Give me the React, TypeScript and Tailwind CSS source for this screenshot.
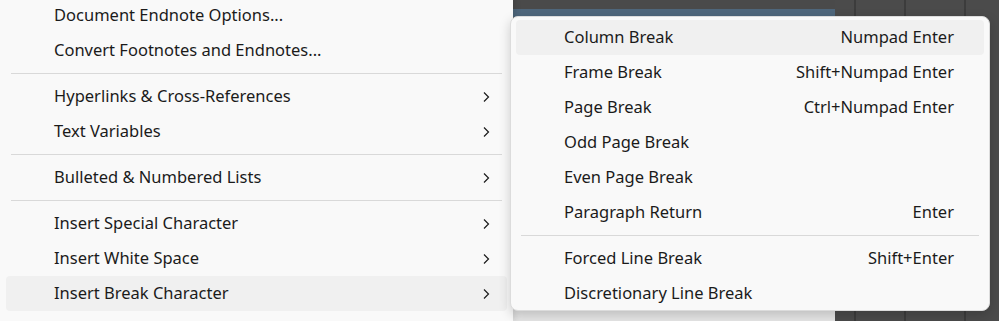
import React from "react";

type Item = { label: string; shortcut?: string; sub?: boolean; active?: boolean } | "sep";

const mainItems: Item[] = [
  { label: "Document Endnote Options..." },
  { label: "Convert Footnotes and Endnotes..." },
  "sep",
  { label: "Hyperlinks & Cross-References", sub: true },
  { label: "Text Variables", sub: true },
  "sep",
  { label: "Bulleted & Numbered Lists", sub: true },
  "sep",
  { label: "Insert Special Character", sub: true },
  { label: "Insert White Space", sub: true },
  { label: "Insert Break Character", sub: true, active: true },
];

const breakItems: Item[] = [
  { label: "Column Break", shortcut: "Numpad Enter", active: true },
  { label: "Frame Break", shortcut: "Shift+Numpad Enter" },
  { label: "Page Break", shortcut: "Ctrl+Numpad Enter" },
  { label: "Odd Page Break" },
  { label: "Even Page Break" },
  { label: "Paragraph Return", shortcut: "Enter" },
  "sep",
  { label: "Forced Line Break", shortcut: "Shift+Enter" },
  { label: "Discretionary Line Break" },
];

function Chevron() {
  return (
    <svg width="10" height="12" viewBox="0 0 10 12" className="text-[#1b1b1b]">
      <path d="M3 1.5 L7.5 6 L3 10.5" fill="none" stroke="currentColor" strokeWidth="1.2" />
    </svg>
  );
}

function Separator() {
  return (
    <div className="h-[11px] flex items-center px-[5px]">
      <div className="h-px w-full bg-[#d9d9d9]" />
    </div>
  );
}

export default function App() {
  return (
    <div
      className="relative flex w-[999px] h-[321px] overflow-hidden bg-[#4b4b4b] text-[16.5px] text-[#1b1b1b]"
      style={{ fontFamily: '"Noto Sans", "Open Sans", sans-serif' }}
    >
      {/* main menu */}
      <div className="relative z-10 w-[513px] shrink-0 -mt-[2px] bg-[#f9f9f9] shadow-[2px_0_6px_rgba(0,0,0,0.12)] px-[6px]">
        {mainItems.map((it, i) =>
          it === "sep" ? (
            <Separator key={i} />
          ) : (
            <div
              key={i}
              className={`h-[35px] flex items-center rounded-[4px] pl-[48px] pr-[16px] ${it.active ? "bg-[#f0f0f0]" : ""}`}
            >
              <span className="flex-1">{it.label}</span>
              {it.sub && <Chevron />}
            </div>
          )
        )}
      </div>

      {/* background app behind the menus */}
      <div className="flex flex-1">
        <div className="flex flex-col w-[322px]">
          <div className="h-[9px] bg-[#4a4a4a]" />
          <div className="h-[8px] bg-[#4f677c]" />
          <div className="flex-1 bg-[#4b4b4b]" />
          <div className="h-[21px] bg-[#e6e6e6]" />
        </div>
        <div className="w-[19px]" />
        <div className="w-[50px] border-l-2 border-[#3c3c3c]" />
        <div className="w-[60px] border-l-2 border-[#3c3c3c]" />
        <div className="flex-1 border-l-2 border-[#3c3c3c]" />
      </div>

      {/* submenu */}
      <div className="absolute z-20 left-[510px] top-[16px] w-[480px] h-[295px] rounded-[8px] bg-[#f9f9f9] border border-[#dcdcdc] shadow-[0_4px_12px_rgba(0,0,0,0.18)] px-[5px] pt-[3px]">
        {breakItems.map((it, i) =>
          it === "sep" ? (
            <Separator key={i} />
          ) : (
            <div
              key={i}
              className={`h-[35px] flex items-center rounded-[4px] pl-[48px] pr-[30px] ${it.active ? "bg-[#f0f0f0]" : ""}`}
            >
              <span className="flex-1">{it.label}</span>
              {it.shortcut && <span>{it.shortcut}</span>}
            </div>
          )
        )}
      </div>
    </div>
  );
}
